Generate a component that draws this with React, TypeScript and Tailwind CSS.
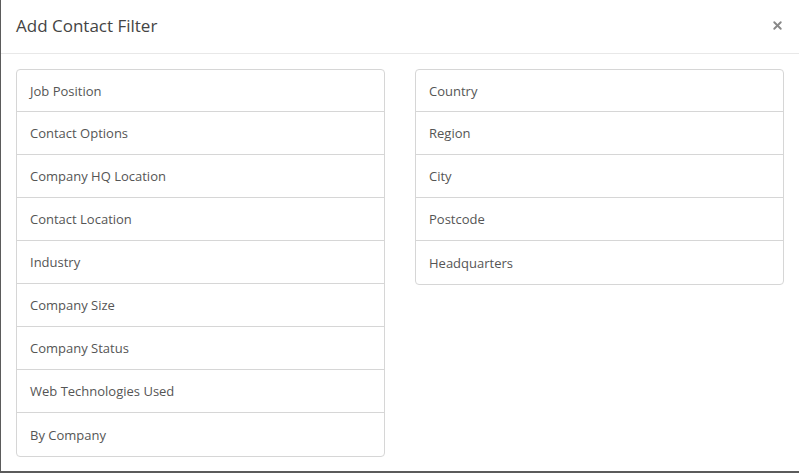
import { X } from 'lucide-react'

const left = [
  'Job Position',
  'Contact Options',
  'Company HQ Location',
  'Contact Location',
  'Industry',
  'Company Size',
  'Company Status',
  'Web Technologies Used',
  'By Company',
]

const right = ['Country', 'Region', 'City', 'Postcode', 'Headquarters']

function FilterList({ items }: { items: string[] }) {
  return (
    <div className="border border-[#d6d6d6] rounded-[4px] divide-y divide-[#d6d6d6] bg-white self-start">
      {items.map((item) => (
        <div key={item} className="h-[43px] first:h-[42px] flex items-center px-[13px] pt-[2px] text-[13px] text-[#555]">
          {item}
        </div>
      ))}
    </div>
  )
}

export default function App() {
  return (
    <div className="w-[799px] h-[473px] bg-[#5b5b5b] pl-px pb-[2px] overflow-hidden" style={{ fontFamily: '"Open Sans", sans-serif' }}>
      <div className="h-full bg-white flex flex-col">
        <div className="h-[54px] shrink-0 flex items-center justify-between pl-[15px] pr-[15px] pb-[2px] border-b border-[#e8e8e8]">
          <h4 className="text-[17px] text-[#444] leading-none">Add Contact Filter</h4>
          <button className="text-[#888]">
            <X size={13} strokeWidth={3.5} />
          </button>
        </div>
        <div className="grid grid-cols-2 gap-[30px] pt-[15px] pl-[15px] pr-[15px]">
          <FilterList items={left} />
          <FilterList items={right} />
        </div>
      </div>
    </div>
  )
}
